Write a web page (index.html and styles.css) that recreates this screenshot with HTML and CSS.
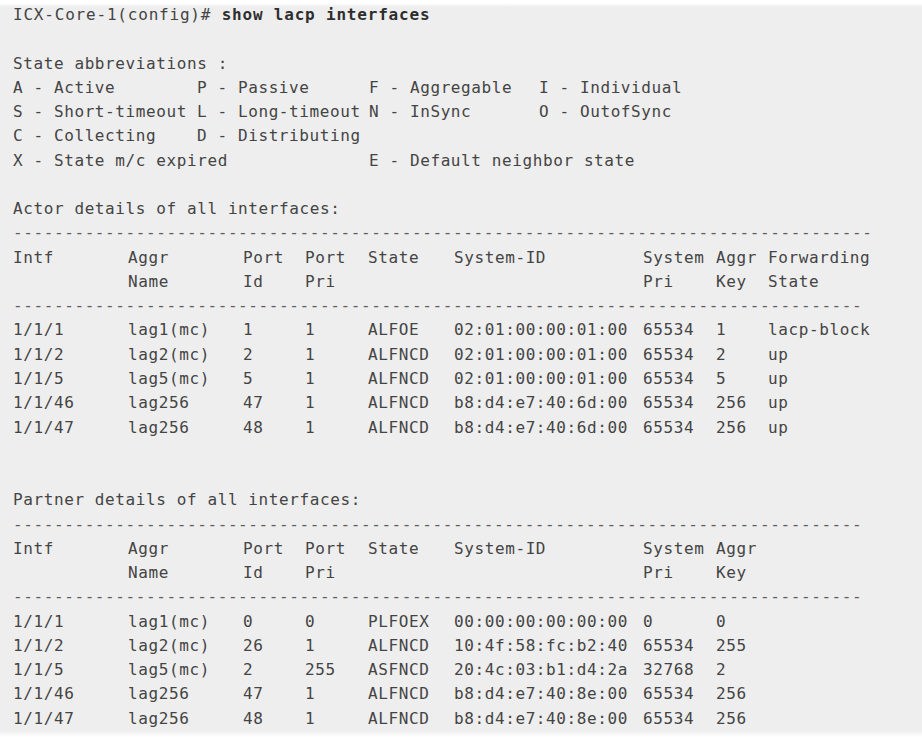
FILE: index.html
```html
<!DOCTYPE html>
<html lang="en">
<head>
<meta charset="utf-8">
<title>show lacp interfaces</title>
<link rel="stylesheet" href="styles.css">
</head>
<body>
<main class="terminal">
  <p class="line cmd">ICX-Core-1(config)# <b>show lacp interfaces</b></p>
  <p class="line"></p>
  <p class="line">State abbreviations :</p>
  <div class="legend">
    <span>A - Active</span><span>P - Passive</span><span>F - Aggregable</span><span>I - Individual</span>
    <span>S - Short-timeout</span><span>L - Long-timeout</span><span>N - InSync</span><span>O - OutofSync</span>
    <span>C - Collecting</span><span>D - Distributing</span><span></span><span></span>
    <span class="span2">X - State m/c expired</span><span>E - Default neighbor state</span><span></span>
  </div>
  <p class="line"></p>
  <p class="line">Actor details of all interfaces:</p>
  <p class="line rule">------------------------------------------------------------------------------------</p>
  <div class="lacp-table">
    <span>Intf</span><span>Aggr</span><span>Port</span><span>Port</span><span>State</span><span>System-ID</span><span>System</span><span>Aggr</span><span>Forwarding</span>
    <span></span><span>Name</span><span>Id</span><span>Pri</span><span></span><span></span><span>Pri</span><span>Key</span><span>State</span>
  </div>
  <p class="line rule">-----------------------------------------------------------------------------------</p>
  <div class="lacp-table">
    <span>1/1/1</span><span>lag1(mc)</span><span>1</span><span>1</span><span>ALFOE</span><span>02:01:00:00:01:00</span><span>65534</span><span>1</span><span>lacp-block</span>
    <span>1/1/2</span><span>lag2(mc)</span><span>2</span><span>1</span><span>ALFNCD</span><span>02:01:00:00:01:00</span><span>65534</span><span>2</span><span>up</span>
    <span>1/1/5</span><span>lag5(mc)</span><span>5</span><span>1</span><span>ALFNCD</span><span>02:01:00:00:01:00</span><span>65534</span><span>5</span><span>up</span>
    <span>1/1/46</span><span>lag256</span><span>47</span><span>1</span><span>ALFNCD</span><span>b8:d4:e7:40:6d:00</span><span>65534</span><span>256</span><span>up</span>
    <span>1/1/47</span><span>lag256</span><span>48</span><span>1</span><span>ALFNCD</span><span>b8:d4:e7:40:6d:00</span><span>65534</span><span>256</span><span>up</span>
  </div>
  <p class="line"></p>
  <p class="line"></p>
  <p class="line">Partner details of all interfaces:</p>
  <p class="line rule">-----------------------------------------------------------------------------------</p>
  <div class="lacp-table">
    <span>Intf</span><span>Aggr</span><span>Port</span><span>Port</span><span>State</span><span>System-ID</span><span>System</span><span>Aggr</span><span></span>
    <span></span><span>Name</span><span>Id</span><span>Pri</span><span></span><span></span><span>Pri</span><span>Key</span><span></span>
  </div>
  <p class="line rule">-----------------------------------------------------------------------------------</p>
  <div class="lacp-table">
    <span>1/1/1</span><span>lag1(mc)</span><span>0</span><span>0</span><span>PLFOEX</span><span>00:00:00:00:00:00</span><span>0</span><span>0</span><span></span>
    <span>1/1/2</span><span>lag2(mc)</span><span>26</span><span>1</span><span>ALFNCD</span><span>10:4f:58:fc:b2:40</span><span>65534</span><span>255</span><span></span>
    <span>1/1/5</span><span>lag5(mc)</span><span>2</span><span>255</span><span>ASFNCD</span><span>20:4c:03:b1:d4:2a</span><span>32768</span><span>2</span><span></span>
    <span>1/1/46</span><span>lag256</span><span>47</span><span>1</span><span>ALFNCD</span><span>b8:d4:e7:40:8e:00</span><span>65534</span><span>256</span><span></span>
    <span>1/1/47</span><span>lag256</span><span>48</span><span>1</span><span>ALFNCD</span><span>b8:d4:e7:40:8e:00</span><span>65534</span><span>256</span><span></span>
  </div>
</main>
</body>
</html>
```
FILE: styles.css
```css
:root {
  --lh: 24.28px;
}

* {
  box-sizing: border-box;
}

html, body {
  margin: 0;
  padding: 0;
  background: #ffffff;
}

body {
  font-family: "DejaVu Sans Mono", "Liberation Mono", monospace;
  font-size: 16px;
  letter-spacing: 0.6px;
  color: #444444;
}

.terminal {
  height: 737px;
  padding: 3px 0 0 13px;
  overflow: hidden;
  background: linear-gradient(to bottom,
    #ffffff 0px, #ffffff 3px, #eeeeee 7px,
    #eeeeee 731px, #f8f8f8 734px, #ffffff 737px);
}

.line {
  margin: 0;
  height: var(--lh);
  line-height: var(--lh);
  white-space: pre;
}

.cmd {
  letter-spacing: 0.8px;
}

.cmd b {
  font-weight: bold;
  color: #2e2e2e;
}

.rule {
  color: #606060;
}

.legend {
  display: grid;
  grid-template-columns: 184px 172px 170px 1fr;
  grid-auto-rows: var(--lh);
  line-height: var(--lh);
  white-space: pre;
}

.legend .span2 {
  grid-column: span 2;
}

.lacp-table {
  display: grid;
  grid-template-columns: 115px 115px 62px 63px 86px 189px 73px 52px 1fr;
  grid-auto-rows: var(--lh);
  line-height: var(--lh);
  white-space: pre;
}
```
